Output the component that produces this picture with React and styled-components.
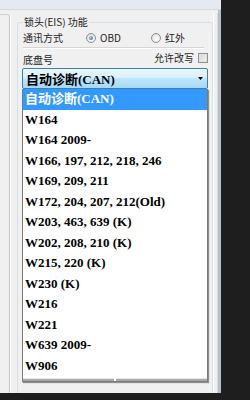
import React from 'react';
import styled, { createGlobalStyle } from 'styled-components';

const GlobalStyle = createGlobalStyle`
  html, body {
    margin: 0;
    padding: 0;
    background: #1e1e1e;
  }
  body {
    width: 250px;
    height: 400px;
    overflow: hidden;
  }
`;

const Window = styled.div`
  width: 221px;
  height: 393px;
  background: #f0f0f0;
  display: flex;
  flex-direction: column;
  overflow: hidden;
  font-family: 'Noto Sans CJK SC', 'Liberation Sans', sans-serif;
`;

const TitleBand = styled.div`
  flex: none;
  height: 9px;
  background: #e5e9f2;
  border-bottom: 1px solid #d3d8e1;
`;

const Body = styled.div`
  flex: 1;
  display: flex;
  min-height: 0;
`;

const SidePanel = styled.div`
  flex: none;
  width: 9px;
  margin-top: 4px;
  margin-right: 7px;
  border-top: 1px solid #d0d0d0;
  border-right: 1px solid #c4c4c4;
  border-top-right-radius: 3px;
  box-shadow: 1px 0 0 #fff;
`;

const RightEdge = styled.div`
  flex: none;
  width: 3px;
  margin-top: 3px;
  border-left: 1px solid #fff;
  border-right: 1px solid #d6d9de;
`;

const Frame = styled.div`
  flex: none;
  width: 3px;
  background: #b6c0cc;
`;

const Group = styled.fieldset`
  box-sizing: border-box;
  flex: none;
  width: 196px;
  min-width: 0;
  margin: 5px 0 0;
  padding: 0 4px;
  border: 1px solid #d5dfe5;
  border-bottom: none;
  border-radius: 3px 3px 0 0;
  display: flex;
  flex-direction: column;
`;

const Legend = styled.legend`
  margin-left: 1px;
  padding: 0 1px;
  font-size: 10px;
  line-height: 14px;
  color: #1a1a1a;
`;

const Row = styled.div`
  display: flex;
  align-items: center;
  justify-content: ${(p) => (p.spread ? 'space-between' : 'flex-start')};
  height: 17px;
`;

const Label = styled.span`
  flex: none;
  width: ${(p) => (p.wide ? '63px' : 'auto')};
  margin-left: 1px;
  margin-top: ${(p) => p.drop || 0}px;
  font-size: 10px;
  line-height: 14px;
  color: #1e1e1e;
  white-space: nowrap;
`;

const Option = styled.label`
  flex: none;
  display: flex;
  align-items: center;
  gap: 4px;
  width: 65px;
  font-size: 10px;
  line-height: 14px;
  color: #1e1e1e;
`;

const Radio = styled.span`
  box-sizing: border-box;
  width: 10px;
  height: 10px;
  border-radius: 50%;
  border: 1px solid #8e8f8f;
  background: radial-gradient(circle at 60% 65%, #ffffff 0%, #e8e8e8 55%, #cfcfcf 100%);
  display: flex;
  align-items: center;
  justify-content: center;

  &::after {
    content: '';
    width: 4px;
    height: 4px;
    border-radius: 50%;
    background: ${(p) =>
      p.checked ? 'radial-gradient(circle at 35% 35%, #a9c9ea, #2a5f94)' : 'transparent'};
  }
`;

const Separator = styled.div`
  height: 0;
  margin: 1px 4px 0 1px;
  border-top: 1px solid #d5d5d5;
  border-bottom: 1px solid #fff;
`;

const CheckWrap = styled.label`
  display: flex;
  align-items: center;
  gap: 4px;
`;

const Checkbox = styled.span`
  box-sizing: border-box;
  width: 10px;
  height: 10px;
  border: 1px solid #8e8f8f;
  background: #fff;
  box-shadow: inset 0 0 0 1px #e2e2e2;
  background-image: linear-gradient(135deg, #d4d4d4, #f6f6f6);
`;

const Combo = styled.div`
  box-sizing: border-box;
  height: 21px;
  margin-top: 2px;
  padding: 0 4px 0 3px;
  display: flex;
  align-items: center;
  justify-content: space-between;
  border: 1px solid #3c7fb1;
  border-radius: 2px;
  background: linear-gradient(#eaf6fd 0%, #d9f0fc 45%, #bee6fd 50%, #a7d9f5 100%);
  font-family: 'Liberation Serif', 'Noto Sans CJK SC', serif;
  font-weight: bold;
  font-size: 13px;
  color: #000;
`;

const List = styled.div`
  box-sizing: border-box;
  width: 186px;
  border: 1px solid #7a7a7a;
  border-top: none;
  background: #fff;
  box-shadow: 1px 1px 1px rgba(0, 0, 0, 0.4);
  display: flex;
  flex-direction: column;
`;

const Item = styled.div`
  height: 20.5px;
  line-height: 20.5px;
  padding-left: 2px;
  white-space: nowrap;
  font-family: 'Liberation Serif', 'Noto Sans CJK SC', serif;
  font-weight: bold;
  font-size: 13px;
  background: ${(p) => (p.active ? '#3399ff' : 'transparent')};
  color: ${(p) => (p.active ? '#fff' : '#000')};
`;

const Strip = styled.div`
  display: flex;
  gap: 2px;
  margin-top: 2px;
`;

const StripPart = styled.div`
  flex: 1;
  height: 2px;
  background: #a9a9a9;
  border-top: 1px solid #e6e6e6;
`;

const chassis = [
  '自动诊断(CAN)',
  'W164',
  'W164 2009-',
  'W166, 197, 212, 218, 246',
  'W169, 209, 211',
  'W172, 204, 207, 212(Old)',
  'W203, 463, 639 (K)',
  'W202, 208, 210 (K)',
  'W215, 220 (K)',
  'W230 (K)',
  'W216',
  'W221',
  'W639 2009-',
  'W906',
];

const Arrow = () => (
  <svg width="5" height="3" viewBox="0 0 5 3">
    <polygon points="0,0 5,0 2.5,3" fill="#000" />
  </svg>
);

export default function App() {
  return (
    <>
      <GlobalStyle />
      <Window>
        <TitleBand />
        <Body>
          <SidePanel />
          <Group>
            <Legend>锁头(EIS) 功能</Legend>
            <Row>
              <Label wide>通讯方式</Label>
              <Option>
                <Radio checked />
                OBD
              </Option>
              <Option>
                <Radio />
                红外
              </Option>
            </Row>
            <Separator />
            <Row spread>
              <Label drop={4}>底盘号</Label>
              <CheckWrap>
                <Label>允许改写</Label>
                <Checkbox />
              </CheckWrap>
            </Row>
            <Combo>
              <span>{chassis[0]}</span>
              <Arrow />
            </Combo>
            <List>
              {chassis.map((name, i) => (
                <Item key={name} active={i === 0}>
                  {name}
                </Item>
              ))}
              <Strip>
                <StripPart />
                <StripPart />
              </Strip>
            </List>
          </Group>
          <RightEdge />
          <Frame />
        </Body>
      </Window>
    </>
  );
}
